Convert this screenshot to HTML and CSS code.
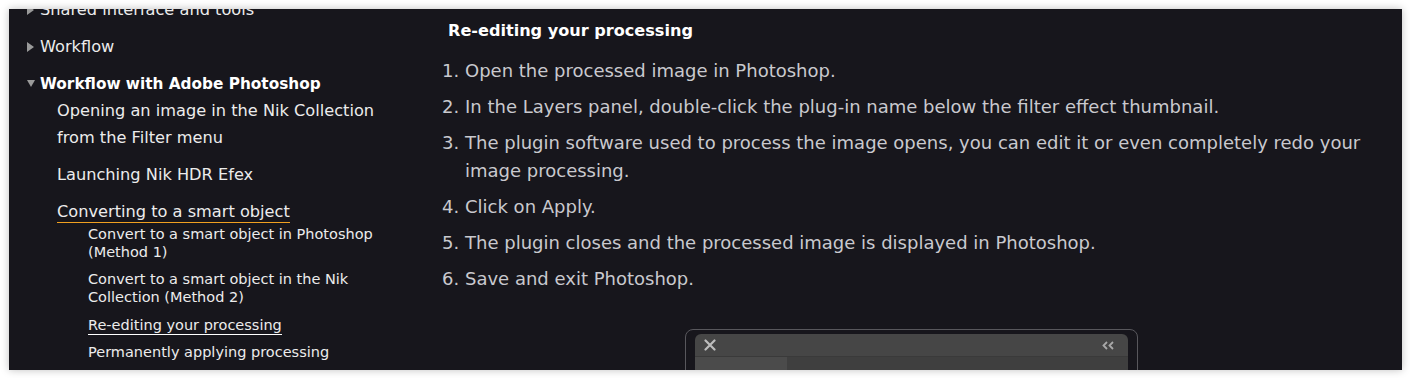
FILE: index.html
```html
<!DOCTYPE html>
<html lang="en">
<head>
  <meta charset="UTF-8" />
  <title>Re-editing your processing</title>
  <link rel="stylesheet" href="styles.css">
</head>
<body>
  <div class="frame">
    <nav class="toc">
      <ul class="toc-top">
        <li class="closed">Shared interface and tools</li>
        <li class="closed">Workflow</li>
        <li class="open"><strong>Workflow with Adobe Photoshop</strong>
          <ul class="toc-sub">
            <li>Opening an image in the Nik Collection from the Filter menu</li>
            <li>Launching Nik HDR Efex</li>
            <li><span class="current-parent">Converting to a smart object</span>
              <ul class="toc-leaf">
                <li>Convert to a smart object in Photoshop (Method 1)</li>
                <li>Convert to a smart object in the Nik Collection (Method 2)</li>
                <li class="gap"><span class="current">Re-editing your processing</span></li>
                <li>Permanently applying processing</li>
              </ul>
            </li>
          </ul>
        </li>
      </ul>
    </nav>

    <main class="content">
      <h3>Re-editing your processing</h3>
      <ol class="steps">
        <li>Open the processed image in Photoshop.</li>
        <li>In the Layers panel, double-click the plug-in name below the filter effect thumbnail.</li>
        <li>The plugin software used to process the image opens, you can edit it or even completely redo your image processing.</li>
        <li>Click on Apply.</li>
        <li>The plugin closes and the processed image is displayed in Photoshop.</li>
        <li>Save and exit Photoshop.</li>
      </ol>

      <div class="shot">
        <div class="shot-win">
          <div class="shot-bar">
            <svg width="12" height="12" viewBox="0 0 12 12"><path d="M1.5 1.5l9 9M10.5 1.5l-9 9" stroke="#bdbdbd" stroke-width="2.2" stroke-linecap="round"/></svg>
            <svg width="13" height="9" viewBox="0 0 13 9"><path d="M5 1L1.5 4.5 5 8M11 1L7.5 4.5 11 8" stroke="#a8a8a8" stroke-width="1.8" fill="none"/></svg>
          </div>
          <div class="shot-body">
            <div class="shot-tab"></div>
          </div>
        </div>
      </div>
    </main>
  </div>
</body>
</html>
```

FILE: styles.css
```css
* { box-sizing: border-box; }
body {
  margin: 0;
  background: #fff;
  font-family: "DejaVu Sans", sans-serif;
}
.frame {
  margin: 9px;
  height: 361px;
  width: 1393px;
  background: #17161c;
  box-shadow: 0 0 8px rgba(0,0,0,0.25);
  display: flex;
  overflow: hidden;
}

/* sidebar */
.toc {
  width: 420px;
  flex: none;
  color: #ececec;
}
.toc ul {
  list-style: none;
  margin: 0;
  padding: 0;
}
.toc-top {
  margin-top: -13px !important;
  padding-left: 31px !important;
  font-size: 16.2px;
  line-height: 27px;
}
.toc-top > li {
  position: relative;
  margin-bottom: 10px;
}
.toc-top > li::before {
  content: "";
  position: absolute;
  left: -13px;
  top: 9px;
  border-style: solid;
}
.toc-top > li.closed::before {
  border-width: 5px 0 5px 7px;
  border-color: transparent transparent transparent #9a9a9a;
}
.toc-top > li.open::before {
  top: 10px;
  border-width: 7px 4.5px 0 4.5px;
  border-color: #9a9a9a transparent transparent transparent;
}
.toc-top strong { font-weight: 700; color: #fff; font-size: 15.3px; }
.toc-sub {
  padding-left: 17px !important;
  margin-top: -1px !important;
}
.toc-sub > li {
  margin-top: 10px;
  width: 330px;
}
.toc-sub > li:first-child { margin-top: 0; }
.current-parent {
  border-bottom: 1.5px solid #f0a020;
  padding-bottom: 1px;
}
.toc-leaf {
  padding-left: 31px !important;
  font-size: 14.5px;
  line-height: 18px;
  margin-top: 0 !important;
}
.toc-leaf li {
  margin-top: 9px;
  width: 300px;
}
.toc-leaf li.gap { margin-top: 10px; }
.toc-leaf li:first-child { margin-top: 0; }
.current {
  border-bottom: 1.5px solid #fff;
  padding-bottom: 1px;
}

/* main */
.content {
  flex: 1;
  padding: 8px 30px 0 16px;
  color: #c9c9ce;
}
.content h3 {
  margin: 0 0 12px 3px;
  font-size: 16.1px;
  line-height: 28px;
  font-weight: 700;
  color: #fff;
}
.steps {
  margin: 0;
  padding-left: 20px;
  font-size: 18px;
  line-height: 28px;
}
.steps li {
  margin-bottom: 8px;
  padding-left: 0;
}
.shot {
  width: 453px;
  height: 60px;
  margin: 36px 0 0 240px;
  border: 1px solid #58575c;
  border-radius: 8px;
  padding: 4px 9px 0;
}
.shot-win {
  background: #464646;
  border-radius: 6px 6px 0 0;
  height: 100%;
}
.shot-bar {
  height: 23px;
  display: flex;
  justify-content: space-between;
  align-items: center;
  padding: 0 13px 0 9px;
  border-bottom: 1px solid #3a3a3a;
}
.shot-body {
  background: #3f3f3f;
  height: 30px;
}
.shot-tab {
  width: 92px;
  height: 100%;
  background: #4b4b4b;
}
```
